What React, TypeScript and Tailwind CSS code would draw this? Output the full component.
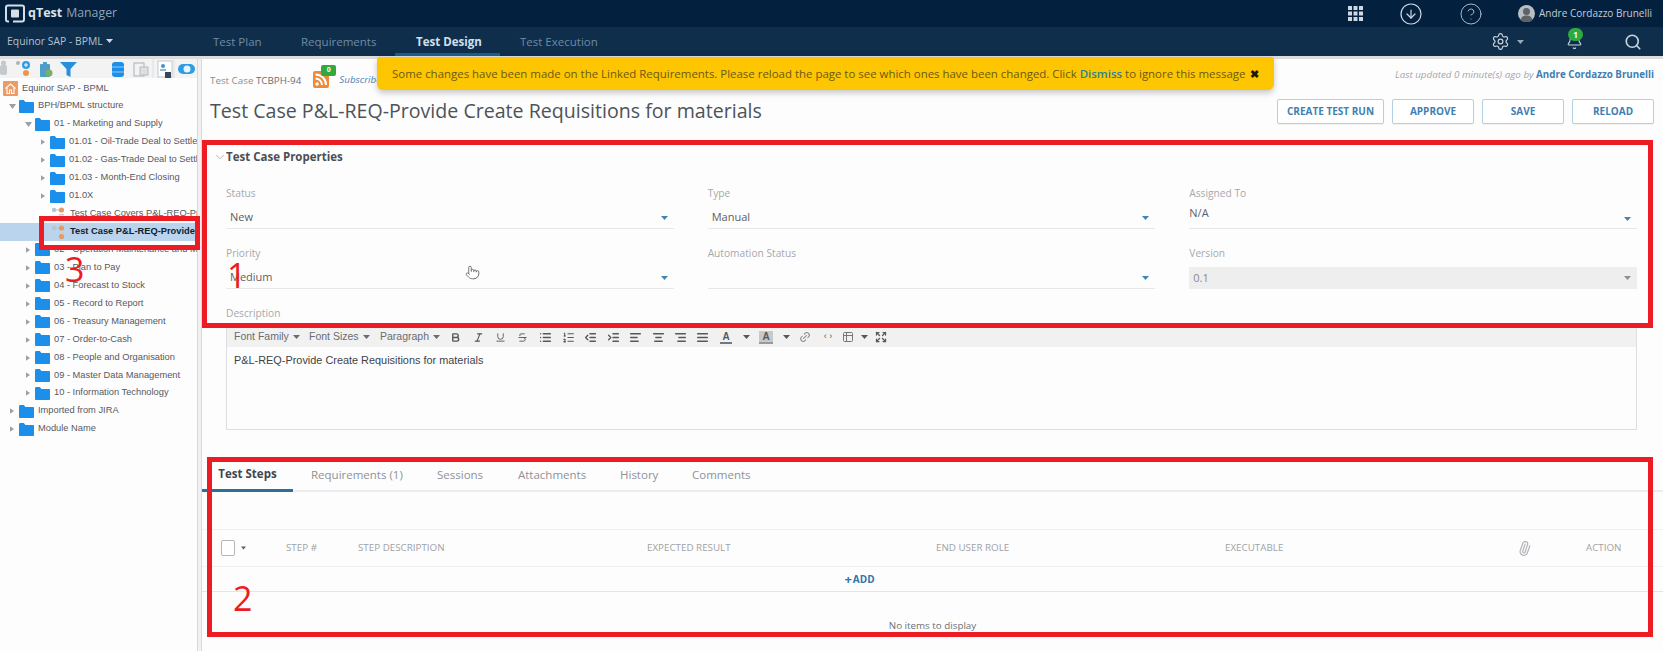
import React from "react";
import { CircleArrowDown, CircleHelp, Settings, Bell, Search, ChevronDown, Paperclip, Pointer, Bold, Italic, Underline, Strikethrough, List, ListOrdered, IndentDecrease, IndentIncrease, AlignLeft, AlignCenter, AlignRight, AlignJustify, Link2, Table2, Expand } from "lucide-react";

const Caret = ({ className = "" }: { className?: string }) => (
  <svg width="7" height="4" viewBox="0 0 7 4" className={className} fill="currentColor"><path d="M0 0h7L3.5 4z" /></svg>
);

const Folder = () => (
  <svg width="15" height="13" viewBox="0 0 15 13" className="shrink-0"><path d="M0 1.5C0 .7.5 0 1.2 0h3.6l1.6 2H14c.6 0 1 .4 1 1v9c0 .6-.4 1-1 1H1c-.6 0-1-.4-1-1z" fill="#1b8fea" /></svg>
);

const TcIcon = () => (
  <svg width="17" height="16" viewBox="0 0 17 16" className="shrink-0">
    <circle cx="3" cy="4" r="2.2" fill="#b9c4cc" />
    <path d="M5 4h4" stroke="#b9c4cc" />
    <circle cx="10.5" cy="4" r="2.6" fill="#e69a63" />
    <path d="M8 8h5v1.5H8z" fill="#c9ced3" />
    <circle cx="10.5" cy="12.5" r="2.6" fill="#e69a63" />
  </svg>
);

type Row = { t: string; kind: "root" | "folder" | "tc"; arrow?: "open" | "closed"; pad: string; sel?: boolean };
const rows: Row[] = [
  { t: "Equinor SAP - BPML", kind: "root", pad: "pl-[3px]" },
  { t: "BPH/BPML structure", kind: "folder", arrow: "open", pad: "pl-[9px]" },
  { t: "01 - Marketing and Supply", kind: "folder", arrow: "open", pad: "pl-[25px]" },
  { t: "01.01 - Oil-Trade Deal to Settlement", kind: "folder", arrow: "closed", pad: "pl-[40px]" },
  { t: "01.02 - Gas-Trade Deal to Settlement", kind: "folder", arrow: "closed", pad: "pl-[40px]" },
  { t: "01.03 - Month-End Closing", kind: "folder", arrow: "closed", pad: "pl-[40px]" },
  { t: "01.0X", kind: "folder", arrow: "closed", pad: "pl-[40px]" },
  { t: "Test Case Covers P&L-REQ-Provide", kind: "tc", pad: "pl-[51px]" },
  { t: "Test Case P&L-REQ-Provide Create", kind: "tc", pad: "pl-[51px]", sel: true },
  { t: "02 - Operation Maintenance and Modifications", kind: "folder", arrow: "closed", pad: "pl-[25px]" },
  { t: "03 - Plan to Pay", kind: "folder", arrow: "closed", pad: "pl-[25px]" },
  { t: "04 - Forecast to Stock", kind: "folder", arrow: "closed", pad: "pl-[25px]" },
  { t: "05 - Record to Report", kind: "folder", arrow: "closed", pad: "pl-[25px]" },
  { t: "06 - Treasury Management", kind: "folder", arrow: "closed", pad: "pl-[25px]" },
  { t: "07 - Order-to-Cash", kind: "folder", arrow: "closed", pad: "pl-[25px]" },
  { t: "08 - People and Organisation", kind: "folder", arrow: "closed", pad: "pl-[25px]" },
  { t: "09 - Master Data Management", kind: "folder", arrow: "closed", pad: "pl-[25px]" },
  { t: "10 - Information Technology", kind: "folder", arrow: "closed", pad: "pl-[25px]" },
  { t: "Imported from JIRA", kind: "folder", arrow: "closed", pad: "pl-[9px]" },
  { t: "Module Name", kind: "folder", arrow: "closed", pad: "pl-[9px]" },
];

const TreeRow = ({ r }: { r: Row }) => (
  <div className={`flex h-[17.95px] items-center whitespace-nowrap overflow-hidden ${r.pad} ${r.sel ? "bg-[#b9d4ec] font-bold text-[#10202e]" : "text-[#55595e]"}`}>
    {r.kind === "folder" && (
      <span className="w-[10px] shrink-0 flex text-[#9aa0a6]">
        {r.arrow === "open" ? (
          <svg width="7" height="5" viewBox="0 0 7 5" fill="currentColor"><path d="M0 0h7L3.5 5z" /></svg>
        ) : (
          <svg width="4" height="6" viewBox="0 0 5 7" fill="currentColor" className="ml-[1px]"><path d="M0 0l5 3.5L0 7z" /></svg>
        )}
      </span>
    )}
    {r.kind === "folder" && <Folder />}
    {r.kind === "folder" && <span className="ml-[4px]">{r.t}</span>}
    {r.kind === "tc" && <TcIcon />}
    {r.kind === "tc" && <span className="ml-[2px]">{r.t}</span>}
    {r.kind === "root" && (
      <svg width="15" height="15" viewBox="0 0 15 15" className="shrink-0">
        <rect width="15" height="15" rx="1" fill="#ee9a66" />
        <path d="M2.5 7.5L7.5 3l5 4.500M4 7v5.500h2.500V9h2v3.500H11V7" fill="none" stroke="#fff" strokeWidth="1.100" />
      </svg>
    )}
    {r.kind === "root" && <span className="ml-[4px]">{r.t}</span>}
  </div>
);

const SideTools = () => (
  <div className="h-[19px] bg-[#f3f3f3] flex items-center relative overflow-hidden">
    <svg width="197" height="19" viewBox="0 0 197 19">
      <rect x="0" y="6" width="7" height="10" rx="2" fill="#c5c9cc" />
      <circle cx="3.500" cy="4" r="2.500" fill="#c5c9cc" />
      <circle cx="18" cy="4" r="2" fill="#aab4bb" />
      <circle cx="26" cy="6" r="4" fill="#2e9be6" />
      <path d="M24 6h4M26 4v4" stroke="#fff" />
      <circle cx="26" cy="14" r="3" fill="#ef9448" />
      <rect x="40" y="5" width="10" height="13" rx="1" fill="#4f9ec9" />
      <rect x="43" y="3" width="4" height="3" fill="#4f9ec9" />
      <circle cx="49" cy="14" r="3.500" fill="#7bb062" />
      <path d="M60 3h17l-6.500 7v8l-4-2v-6z" fill="#2a8ed8" />
      <rect x="112" y="3" width="12" height="15" rx="3" fill="#1b8fea" />
      <path d="M112 8h12M112 13h12" stroke="#e8f3fb" strokeWidth=".6" />
      <rect x="134" y="4" width="10" height="13" fill="none" stroke="#b7bcc0" strokeWidth="1.200" />
      <rect x="140" y="8" width="8" height="8" fill="#dde0e2" stroke="#b7bcc0" />
      <rect x="158" y="2" width="14" height="16" fill="#fff" stroke="#c3c8cc" />
      <circle cx="163" cy="7" r="2" fill="#3f93cf" />
      <rect x="160" y="10" width="6" height="2" fill="#8fb9d6" />
      <rect x="165" y="13" width="6" height="6" fill="#33495b" />
      <rect x="178" y="5" width="17" height="10" rx="5" fill="#2e9be6" />
      <circle cx="187" cy="10" r="3.500" fill="#e8f3fb" />
      <path d="M153 0v19M174 0v19" stroke="#e0e0e0" />
    </svg>
  </div>
);

const Field = ({ label, value, flush, disabled }: { label: string; value?: string; flush?: boolean; disabled?: boolean }) => (
  <div className="h-[44px] flex flex-col">
    <div className="h-[16px] text-[10.2px] leading-[16px] text-[#a6a8ab]">{label}</div>
    <div className={`flex-1 flex justify-between ${disabled ? "mt-[6px] bg-[#eeeeee] items-center pl-[4px] pr-[6px]" : flush ? "border-b border-[#e6e8ea] pr-[6px]" : "border-b border-[#e6e8ea] items-center pl-[4px] pr-[6px] pt-[6px]"}`}>
      <span className={`text-[11px] ${disabled ? "text-[#8a8a8a]" : "text-[#5c6064]"} ${flush ? "leading-[16px] mt-[4px]" : ""}`}>{value}</span>
      <Caret className={`${disabled ? "text-[#8f8f8f]" : "text-[#3f86b0]"} ${flush ? "mt-[16px]" : ""}`} />
    </div>
  </div>
);

const Tool = ({ children, className = "" }: { children: React.ReactNode; className?: string }) => (
  <span className={`flex items-center justify-center text-[#55595c] ${className}`}>{children}</span>
);

const EditorBar = () => (
  <div className="h-[20px] bg-[#f1f1f1] flex items-center pl-[7px] text-[10.5px] text-[#6a6d70] font-['Liberation_Sans',sans-serif] whitespace-nowrap">
    <span className="w-[75px] flex items-center gap-[4px]">Font Family <Caret /></span>
    <span className="w-[71px] flex items-center gap-[4px]">Font Sizes <Caret /></span>
    <span className="w-[64px] flex items-center gap-[4px]">Paragraph <Caret /></span>
    <Tool className="w-[23px]"><Bold size={11} strokeWidth={3} /></Tool>
    <Tool className="w-[22px]"><Italic size={11} strokeWidth={2.500} /></Tool>
    <Tool className="w-[22px]"><Underline size={11} /></Tool>
    <Tool className="w-[23px]"><Strikethrough size={11} /></Tool>
    <Tool className="w-[23px]"><List size={13} strokeWidth={2.500} /></Tool>
    <Tool className="w-[22px]"><ListOrdered size={13} /></Tool>
    <Tool className="w-[23px]"><IndentDecrease size={13} strokeWidth={2.500} /></Tool>
    <Tool className="w-[22px]"><IndentIncrease size={13} strokeWidth={2.500} /></Tool>
    <Tool className="w-[23px]"><AlignLeft size={13} strokeWidth={2.500} /></Tool>
    <Tool className="w-[22px]"><AlignCenter size={13} strokeWidth={2.500} /></Tool>
    <Tool className="w-[22px]"><AlignRight size={13} strokeWidth={2.500} /></Tool>
    <Tool className="w-[23px]"><AlignJustify size={13} strokeWidth={2.500} /></Tool>
    <Tool className="w-[24px]"><span className="border-b-2 border-[#777] text-[10px] leading-[11px] px-[2px] font-bold">A</span></Tool>
    <Tool className="w-[16px]"><Caret /></Tool>
    <Tool className="w-[24px]"><span className="bg-[#c9c9c9] border-b-2 border-[#999] text-[10px] leading-[11px] px-[3px] font-bold">A</span></Tool>
    <Tool className="w-[16px]"><Caret /></Tool>
    <Tool className="w-[22px]"><Link2 size={12} className="-rotate-45 text-[#888]" /></Tool>
    <Tool className="w-[24px] text-[9px] text-[#888]">‹ ›</Tool>
    <Tool className="w-[16px]"><Table2 size={12} className="text-[#777]" /></Tool>
    <Tool className="w-[16px]"><Caret /></Tool>
    <Tool className="w-[18px]"><Expand size={12} strokeWidth={2.500} /></Tool>
  </div>
);

const Btn = ({ t, w }: { t: string; w: string }) => (
  <button className={`${w} h-[25px] border border-[#b3cfe0] rounded-[2px] bg-white text-[10px] font-bold text-[#3f7fb3] shadow-[0_1px_1px_rgba(0,0,0,0.05)]`}>{t}</button>
);

const tabs = [
  { t: "Requirements (1)", w: "w-[126px]" },
  { t: "Sessions", w: "w-[81px]" },
  { t: "Attachments", w: "w-[102px]" },
  { t: "History", w: "w-[72px]" },
  { t: "Comments", w: "w-[90px]" },
];

export default function App() {
  return (
    <div className="relative w-[1663px] h-[651px] overflow-hidden bg-[#fefdfe] font-['Open_Sans',sans-serif] flex flex-col">
      {/* header */}
      <div className="h-[27px] bg-[#03203e] flex items-center pl-[5px] pr-[11px] shrink-0">
        <svg width="20" height="19" viewBox="0 0 20 19" fill="none">
          <path d="M4 17.500H3C1.800 17.500 1 16.700 1 15.500V3.500C1 2.300 1.800 1.500 3 1.500H17C18.200 1.500 19 2.300 19 3.500V15.500C19 16.700 18.200 17.500 17 17.500H8" stroke="#d7dfe6" strokeWidth="2" />
          <rect x="6" y="5.500" width="8" height="8" rx="1" fill="#d7dfe6" />
        </svg>
        <span className="ml-[3px] text-[12.500px] font-bold text-[#dce4ea] leading-none">qTest</span>
        <span className="ml-[4px] text-[12.300px] text-[#8ea3b5] leading-none">Manager</span>
        <div className="ml-auto flex items-center text-[#d0d8df]">
          <svg width="15" height="15" viewBox="0 0 15 15" fill="currentColor">
            <rect width="4" height="4" /><rect x="5.500" width="4" height="4" /><rect x="11" width="4" height="4" />
            <rect y="5.500" width="4" height="4" /><rect x="5.500" y="5.500" width="4" height="4" /><rect x="11" y="5.500" width="4" height="4" />
            <rect y="11" width="4" height="4" /><rect x="5.500" y="11" width="4" height="4" /><rect x="11" y="11" width="4" height="4" />
          </svg>
          <CircleArrowDown size={24} strokeWidth={1.200} className="ml-[36px]" />
          <CircleHelp size={24} strokeWidth={1} className="ml-[36px] text-[#aab8c4]" />
          <svg width="17" height="17" viewBox="0 0 17 17" className="ml-[35px]">
            <circle cx="8.500" cy="8.500" r="8.500" fill="#b9bec3" />
            <circle cx="8.500" cy="6.500" r="3.500" fill="#5d636a" />
            <path d="M2.500 15c1-3.500 3-4.500 6-4.500s5 1 6 4.500a8.500 8.500 0 0 1-12 0z" fill="#5d636a" />
          </svg>
          <span className="ml-[4px] text-[10px] text-[#c2ccd5] whitespace-nowrap">Andre Cordazzo Brunelli</span>
        </div>
      </div>
      <div className="h-[29px] bg-[#0f2e4c] flex items-center shrink-0 relative">
        <div className="w-[213px] pl-[7px] text-[10.400px] text-[#b0c1cf] flex items-center gap-[3px] whitespace-nowrap">Equinor SAP - BPML <Caret className="text-[#cfd9e1]" /></div>
        <span className="w-[88px] text-[11.500px] text-[#6f8ba2]">Test Plan</span>
        <span className="w-[115px] text-[11.500px] text-[#6f8ba2]">Requirements</span>
        <span className="w-[104px] text-[11.500px] font-bold text-[#cfe0ec] h-full flex items-center">Test Design</span>
        <span className="text-[11.500px] text-[#6f8ba2]">Test Execution</span>
        <div className="ml-auto flex items-center pr-[21px] text-[#c9d3db]">
          <Settings size={19} strokeWidth={1.500} />
          <Caret className="ml-[7px] text-[#98a8b5]" />
          <span className="relative ml-[42px] flex">
            <Bell size={17} strokeWidth={1.500} />
            <span className="absolute left-[2px] -top-[5px] w-[15px] h-[13px] rounded-full bg-[#2faa43] text-white text-[8px] font-bold flex items-center justify-center">1</span>
          </span>
          <Search size={18} strokeWidth={2.200} className="ml-[41px]" />
        </div>
        <div className="absolute left-[395px] bottom-0 w-[105px] h-[3px] bg-[#1b5f85]" />
      </div>
      <div className="h-[3px] bg-[#dcdcdc] shrink-0" />

      {/* body */}
      <div className="flex flex-1 min-h-0">
        <aside className="w-[197px] shrink-0 flex flex-col text-[9.300px] font-['Liberation_Sans',sans-serif]">
          <SideTools />
          <div className="pt-[1.500px]">
            {rows.map((r) => <TreeRow key={r.t} r={r} />)}
          </div>
        </aside>
        <div className="w-[5px] shrink-0 bg-[#f1f1f1] border-x border-[#d9d9d9]" />

        <main className="flex-1 min-w-0 flex flex-col">
          <div className="h-[35px] flex justify-between pl-[8px] pr-[9px] shrink-0">
            <div className="flex items-start pt-[15px] text-[9.800px] text-[#8a8d90] whitespace-nowrap">
              <span>Test Case <span className="text-[#6a6e72]">TCBPH-94</span></span>
              <span className="relative ml-[12px] -mt-[3px] flex">
                <svg width="16" height="17" viewBox="0 0 16 17">
                  <rect width="16" height="17" rx="2" fill="#ee8a38" />
                  <circle cx="4" cy="13" r="1.800" fill="#fff" />
                  <path d="M2.500 7.500a6.500 6.500 0 0 1 6.500 6.500M2.500 3.500a10.500 10.500 0 0 1 10.500 10.500" fill="none" stroke="#fff" strokeWidth="2" />
                </svg>
                <span className="absolute left-[8px] -top-[6px] w-[15px] h-[11px] rounded-[2px] bg-[#32a83f] text-white text-[7px] font-bold flex items-center justify-center">0</span>
              </span>
              <span className="ml-[10px] italic text-[#4a7fb5] -mt-[1px]">Subscribe</span>
            </div>
            <div className="pt-[9px] text-[9.800px] italic text-[#a3a6a9] whitespace-nowrap">
              Last updated 0 minute(s) ago by <span className="not-italic font-bold text-[#3f7fb3]">Andre Cordazzo Brunelli</span>
            </div>
          </div>
          <div className="h-[34px] flex items-center justify-between pl-[8px] pr-[9px] shrink-0">
            <h1 className="text-[19.600px] text-[#4d5358] whitespace-nowrap">Test Case P&amp;L-REQ-Provide Create Requisitions for materials</h1>
            <div className="flex gap-[8px]">
              <Btn t="CREATE TEST RUN" w="w-[107px]" />
              <Btn t="APPROVE" w="w-[82px]" />
              <Btn t="SAVE" w="w-[82px]" />
              <Btn t="RELOAD" w="w-[82px]" />
            </div>
          </div>

          <div className="mt-[19px] h-[20px] flex items-center pl-[11px] shrink-0">
            <ChevronDown size={14} strokeWidth={1.500} className="text-[#a7abaf] shrink-0 -mr-[1px]" />
            <span className="text-[11.500px] font-bold text-[#4a4f54]">Test Case Properties</span>
          </div>

          <div className="mt-[18px] pl-[24px] pr-[26px] shrink-0">
            <div className="grid grid-cols-3 gap-x-[34px] gap-y-[16px]">
              <Field label="Status" value="New" />
              <Field label="Type" value="Manual" />
              <Field label="Assigned To" value="N/A" flush />
              <Field label="Priority" value="Medium" />
              <Field label="Automation Status" />
              <Field label="Version" value="0.1" disabled />
            </div>
            <div className="mt-[16px] h-[16px] text-[10.200px] leading-[16px] text-[#a6a8ab]">Description</div>
            <div className="mt-[6px] h-[103px] border border-[#dcdfe2] border-t-0">
              <EditorBar />
              <div className="pt-[5px] pl-[7px] text-[10.900px] text-[#3f4346] font-['Liberation_Sans',sans-serif]">P&amp;L-REQ-Provide Create Requisitions for materials</div>
            </div>
          </div>

          <div className="mt-[31px] h-[31px] flex shrink-0 border-b-[2px] border-[#ececee]">
            <div className="w-[91px] h-[31px] border-b-[3px] border-[#2d6f96] flex items-center justify-center pb-[2px] text-[11.500px] font-bold text-[#41474d]">Test Steps</div>
            <div className="flex pl-[18px]">
              {tabs.map((t) => (
                <div key={t.t} className={`${t.w} h-[27px] flex items-center text-[11.500px] text-[#8d9297]`}>{t.t}</div>
              ))}
            </div>
          </div>

          <div className="h-[37px] shrink-0" />
          <div className="h-[38px] shrink-0 border-y border-[#f0f0f2] flex items-center text-[9.800px] text-[#a0a2a5] whitespace-nowrap pl-[19px]">
            <span className="w-[14px] h-[16px] border border-[#b4b7ba] rounded-[2px] bg-white shrink-0" />
            <Caret className="ml-[6px] w-[5px] text-[#5a5d60] shrink-0" />
            <span className="w-[40px] shrink-0" />
            <span className="w-[72px] shrink-0">STEP #</span>
            <span className="w-[289px] shrink-0">STEP DESCRIPTION</span>
            <span className="w-[289px] shrink-0">EXPECTED RESULT</span>
            <span className="w-[289px] shrink-0">END USER ROLE</span>
            <span className="w-[292px] shrink-0">EXECUTABLE</span>
            <Paperclip size={17} className="text-[#b2b5b8] w-[15px] shrink-0 -rotate-[25deg]" />
            <span className="ml-[54px] shrink-0">ACTION</span>
          </div>
          <div className="h-[25px] shrink-0 border-b border-[#e4e5e7] flex items-center justify-center pr-[146px] text-[10px] font-bold text-[#3473a8]">
            <span className="text-[13px] leading-none">+</span><span className="ml-[1px]">ADD</span>
          </div>
          <div className="flex-1 flex justify-center pt-[27px] text-[9.800px] text-[#6c7074]">No items to display</div>
        </main>
      </div>

      {/* notification overlay */}
      <div className="absolute left-[377px] top-[57px] w-[897px] h-[33px] bg-[#fdc600] rounded-b-[6px] rounded-t-[3px] shadow-[0_3px_6px_rgba(0,0,0,0.22)] flex items-center pl-[15px] text-[11.450px] text-[#6a5a14] whitespace-nowrap">
        <span>Some changes have been made on the Linked Requirements. Please reload the page to see which ones have been changed. Click <span className="font-semibold text-[#2b7f9c]">Dismiss</span> to ignore this message</span>
        <span className="ml-[5px] text-[11px] font-bold text-[#1d1a08] leading-none">✖</span>
      </div>

      {/* cursor */}
      <Pointer size={15} strokeWidth={1.300} className="absolute left-[465px] top-[265px] text-[#55595d] fill-white" />

      {/* annotations */}
      <div className="absolute left-[202px] top-[140px] w-[1451px] h-[188px] border-[5px] border-[#ed1c24]" />
      <div className="absolute left-[207px] top-[457px] w-[1446px] h-[180px] border-[5px] border-[#ed1c24]" />
      <div className="absolute left-[39px] top-[216px] w-[161px] h-[34px] border-[5px] border-[#ed1c24]" />
      <span className="absolute left-[227px] top-[255px] text-[34px] leading-[40px] text-[#ed1c24]">1</span>
      <span className="absolute left-[233px] top-[578px] text-[34px] leading-[40px] text-[#ed1c24]">2</span>
      <span className="absolute left-[65px] top-[249px] text-[34px] leading-[40px] text-[#ed1c24]">3</span>
    </div>
  );
}
